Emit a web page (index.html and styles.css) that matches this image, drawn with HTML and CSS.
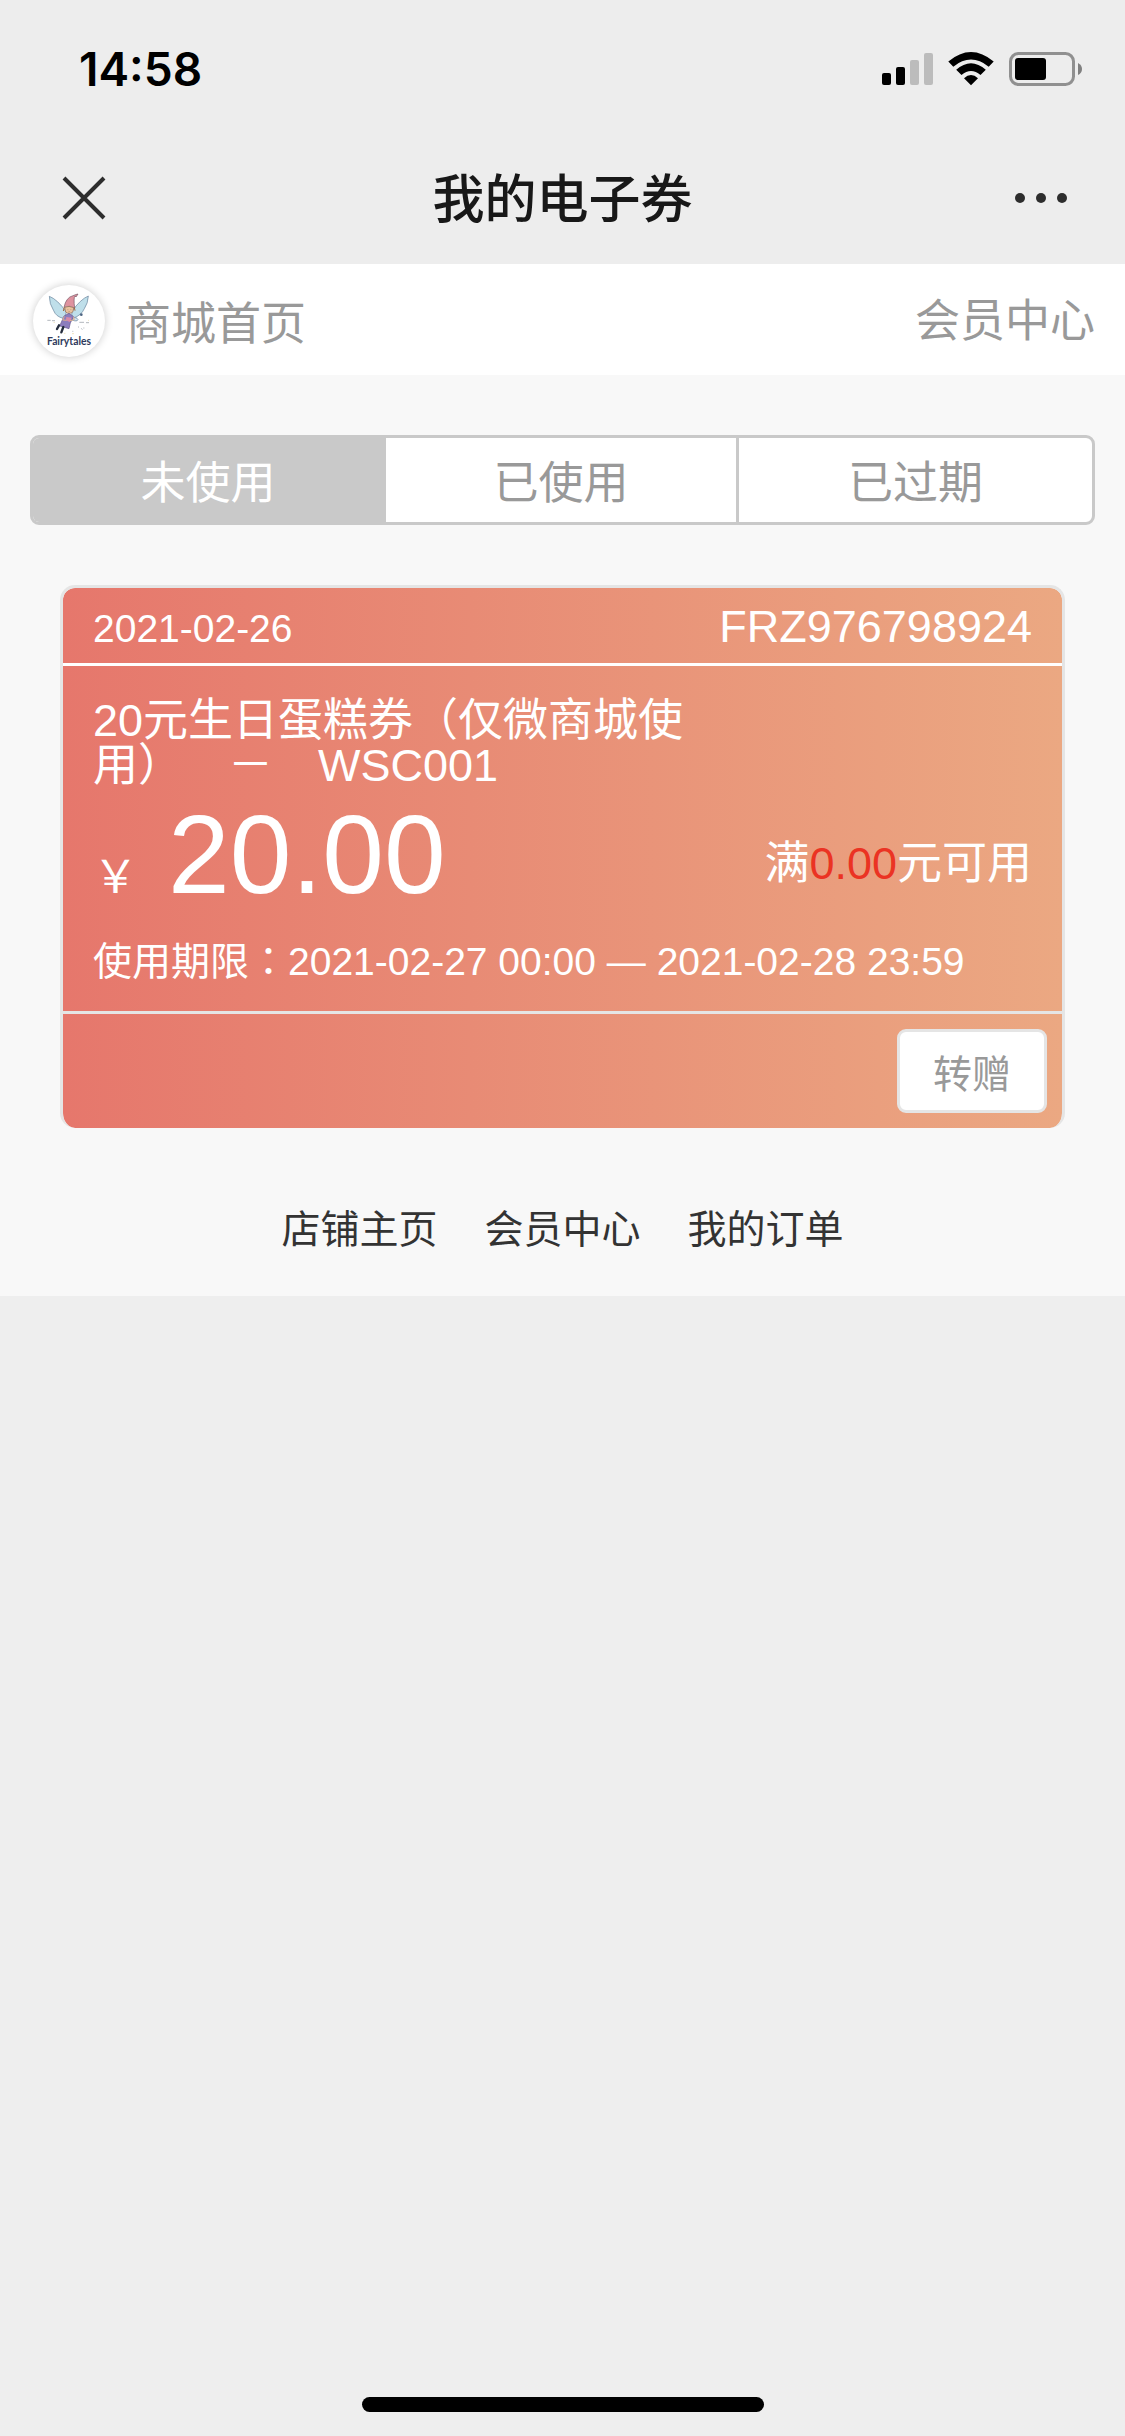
FILE: index.html
```html
<!DOCTYPE html>
<html lang="zh-CN">
<head>
    <meta charset="UTF-8">
    <meta name="viewport" content="width=device-width, initial-scale=1.0">
    <title>我的电子券</title>
    <link rel="stylesheet" href="styles.css">
</head>
<body>
    <div class="status-bar">
        <span class="time">14:58</span>
        <svg class="status-icons" width="202" height="36" viewBox="881 51 202 36">
            <!-- signal -->
            <rect x="882" y="73" width="9" height="12" rx="2"/>
            <rect x="896" y="67" width="9" height="18" rx="2"/>
            <rect x="910" y="60" width="9" height="25" rx="2" fill="#bcbcbc"/>
            <rect x="924" y="53" width="9" height="32" rx="2" fill="#bcbcbc"/>
            <!-- wifi -->
            <path d="M948.300 61.500Q971 42.500 993.700 61.500L988.700 66.700Q971 52.500 953.300 66.700Z"/>
            <path d="M956.200 69.800Q971 56.800 985.800 69.800L980.500 75Q971 66.800 961.500 75Z"/>
            <path d="M964 78.300Q971 71.800 978 78.300L971 85.200Z"/>
            <!-- battery -->
            <rect x="1010.500" y="53.500" width="63" height="31" rx="8" fill="none" stroke="#909090" stroke-width="3"/>
            <rect x="1015" y="58" width="31" height="22" rx="3"/>
            <path d="M1078 63q4 2 4 6t-4 6z" fill="#808080"/>
        </svg>
    </div>
    <div class="nav-bar">
        <button class="nav-btn" type="button" aria-label="关闭">
            <svg width="44" height="44" viewBox="0 0 44 44"><path d="M2 2L42 42M42 2L2 42" stroke="#2d2d2d" stroke-width="4"/></svg>
        </button>
        <h1>我的电子券</h1>
        <button class="nav-btn" type="button" aria-label="更多">
            <svg width="54" height="12" viewBox="0 0 54 12" fill="#2d2d2d"><circle cx="6" cy="6" r="5"/><circle cx="27" cy="6" r="5"/><circle cx="48" cy="6" r="5"/></svg>
        </button>
    </div>

    <div class="container">
        <header class="shop-header">
            <a class="shop" href="#">
                <svg class="logo" viewBox="39 45 216 216">
                    <g stroke="#66809a" stroke-width="2">
                        <path d="M88 79Q112 88 139 126Q138 140 130 145Q108 140 101 122Q88 102 88 79Z" fill="#bfdfea"/>
                        <path d="M205 78Q181 88 156 124Q153 135 159 145Q184 136 193 116Q204 100 205 78Z" fill="#bfdfea"/>
                        <path d="M158 144Q170 140 174 149Q171 156 156 150Z" fill="#cfe5f2"/>
                    </g>
                    <path d="M132 112Q138 82 159 77Q168 73 174 72L168 81L165 78Q160 84 164 114Q147 105 132 112Z" fill="#de929f" stroke="#755865" stroke-width="2"/>
                    <path d="M134 112Q147 106 161 113L159 125Q148 135 137 126Z" fill="#eac39f" stroke="#8c6652" stroke-width="2"/>
                    <path d="M133 112L130 123M163 113L165 122" stroke="#a16a40" stroke-width="3"/>
                    <path d="M142 119h3M151 119h3M145 125h5" stroke="#6f5146" stroke-width="1"/>
                    <path d="M132 138L147 130L161 140L151 159L147 176L119 168Z" fill="#8c7dbd" stroke="#67588e" stroke-width="2"/>
                    <path d="M139 141L155 143L149 156L138 151Z" fill="#d98aa8"/>
                    <path d="M133 139L128 150L140 151M160 140L163 149L150 152" fill="none" stroke="#dfb08e" stroke-width="3"/>
                    <path d="M117 166L111 177M130 171L124 187" stroke="#252d3d" stroke-width="7" stroke-linecap="round"/>
                    <circle cx="184" cy="134" r="4" fill="#4d6583"/>
                    <path d="M82 151h10M96 152h9M178 157h14M198 158h9M174 171h3M184 175l3 4M190 174h3M157 184h3" stroke="#8d949d" stroke-width="2"/>
                    <path d="M101 157h3M204 151h2M157 191h4M133 190h3" stroke="#ead9a2" stroke-width="3"/>
                    <text x="147" y="224" text-anchor="middle">Fairytales</text>
                </svg>
                <span>商城首页</span>
            </a>
            <a href="#">会员中心</a>
        </header>

        <div class="tabs">
            <button class="tab active" type="button">未使用</button>
            <button class="tab" type="button">已使用</button>
            <button class="tab" type="button">已过期</button>
        </div>

        <div class="coupon">
            <div class="coupon-head">
                <span class="date">2021-02-26</span>
                <span>FRZ976798924</span>
            </div>
            <div class="coupon-body">
                <p class="coupon-name">20元生日蛋糕券（仅微商城使用）　－　WSC001</p>
                <div class="coupon-value">
                    <div class="price">￥<strong>20.00</strong></div>
                    <div class="condition">满<em>0.00</em>元可用</div>
                </div>
                <p class="period">使用期限<span lang="zh-TW" class="colon">：</span>2021-02-27 00:00 — 2021-02-28 23:59</p>
            </div>
            <div class="coupon-foot">
                <button class="give-btn" type="button">转赠</button>
            </div>
        </div>

        <footer class="links">
            <a href="#">店铺主页</a>
            <a href="#">会员中心</a>
            <a href="#">我的订单</a>
        </footer>
    </div>

    <div class="home-bar"></div>
</body>
</html>
```
FILE: styles.css
```css
* {
    box-sizing: border-box;
}
body {
    display: flex;
    flex-direction: column;
    min-height: 100vh;
    margin: 0;
    background-color: #eee;
    color: #999;
    font-family: "Liberation Sans", "Noto Sans CJK SC", sans-serif;
    font-size: 45px;
    line-height: 45px;
}
a {
    color: inherit;
    text-decoration: none;
}
button {
    font: inherit;
    color: inherit;
    cursor: pointer;
}
p {
    margin: 0;
}

/* phone bars */
.status-bar {
    display: flex;
    align-items: center;
    justify-content: space-between;
    height: 132px;
    padding: 6px 42px 0 79px;
    background-color: #ededed;
}
.time {
    color: #000;
    font-family: Inter, sans-serif;
    font-size: 46px;
    font-weight: 600;
}
.nav-bar {
    display: flex;
    align-items: center;
    justify-content: space-between;
    height: 132px;
    padding: 0 54px;
    background-color: #ededed;
}
.nav-bar h1 {
    margin: 0;
    padding-top: 3px;
    color: #181818;
    font-size: 52px;
    font-weight: 500;
    line-height: 60px;
}
.nav-btn {
    display: flex;
    align-items: center;
    justify-content: center;
    width: 60px;
    height: 60px;
    padding: 0;
    border: 0;
    background: none;
}
.home-bar {
    width: 402px;
    height: 15px;
    margin: auto auto 24px;
    border-radius: 8px;
    background-color: #000;
}

.container {
    background-color: #f8f8f8;
}
.shop-header {
    display: flex;
    align-items: center;
    justify-content: space-between;
    padding: 21px 30px 18px;
    background-color: #fff;
}
.shop {
    display: flex;
    align-items: center;
    gap: 21px;
    padding-left: 3px;
}
.shop span {
    padding-top: 6px;
}
.logo {
    width: 72px;
    height: 72px;
    border-radius: 50%;
    background-color: #fff;
    box-shadow: 0 0 9px rgba(0, 0, 0, 0.2);
}
.logo text {
    fill: #2e3a5c;
    font-family: Lato, sans-serif;
    font-size: 31px;
    font-weight: bold;
}

.tabs {
    display: grid;
    grid-template-columns: repeat(3, 1fr);
    margin: 60px 30px;
    border: 3px solid #c9c9c9;
    border-radius: 9px;
    background-color: #fff;
    overflow: hidden;
}
.tab {
    height: 84px;
    padding: 6px 0 0;
    border: 0;
    border-right: 3px solid #c9c9c9;
    background: none;
}
.tab:last-child {
    border-right: 0;
}
.tab.active {
    background-color: #c9c9c9;
    color: #fff;
}

.coupon {
    margin: 0 60px;
    border: 3px solid #e5e5e5;
    border-bottom: 0;
    border-radius: 15px;
    background: linear-gradient(to right, #e6776c, #eba882) padding-box;
    color: #fff;
}
.coupon-head {
    display: flex;
    align-items: baseline;
    justify-content: space-between;
    height: 78px;
    padding: 16px 30px 0;
    border-bottom: 3px solid #fff;
}
.date,
.period {
    font-size: 39px;
}
.coupon-body {
    padding: 32px 30px 30px;
}
.coupon-name {
    width: 65%;
    text-spacing-trim: space-all;
}
.coupon-value {
    display: flex;
    align-items: flex-end;
    justify-content: space-between;
    height: 108px;
    margin: 13px 0 30px;
}
.price {
    display: flex;
    align-items: baseline;
    gap: 30px;
}
.price strong {
    font-size: 111px;
    font-weight: normal;
    line-height: 108px;
}
.condition {
    line-height: 90px;
}
.condition em {
    color: #eb3323;
    font-style: normal;
}
.period {
    line-height: 39px;
}
.colon {
    font-family: "Noto Sans CJK TC", sans-serif;
}
.coupon-foot {
    display: flex;
    justify-content: flex-end;
    padding: 15px;
    border-top: 3px solid #e5e5e5;
}
.give-btn {
    width: 150px;
    height: 84px;
    padding: 6px 0 0;
    border: 3px solid #e5e5e5;
    border-radius: 9px;
    background-color: #fff;
    color: #999;
    font-size: 39px;
}

.links {
    display: flex;
    justify-content: center;
    gap: 47px;
    padding: 72px 30px 36px;
    color: #333;
    font-size: 39px;
    line-height: 60px;
}
```
